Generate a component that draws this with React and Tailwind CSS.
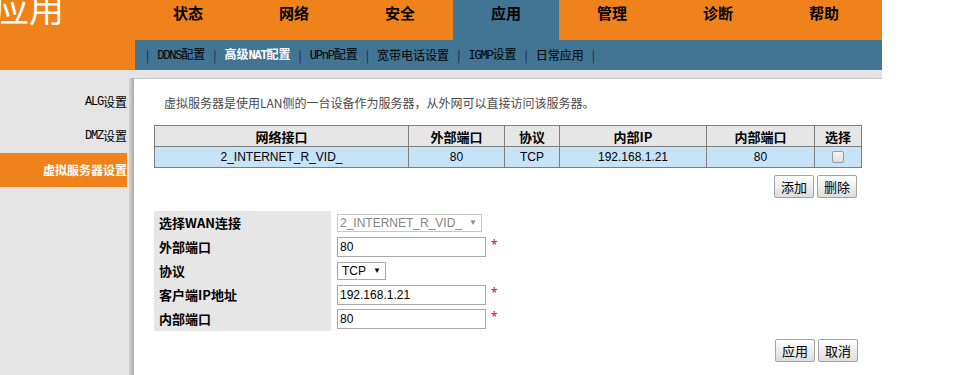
import React from "react";

const cjk = "font-['Noto_Sans_CJK_SC',sans-serif]";
const arial = "font-['Liberation_Sans','Noto_Sans_CJK_SC',sans-serif]";

const tabs = ["状态", "网络", "安全", "应用", "管理", "诊断", "帮助"];
const subItems = ["DDNS配置", "高级NAT配置", "UPnP配置", "宽带电话设置", "IGMP设置", "日常应用"];
const menu = ["ALG设置", "DMZ设置", "虚拟服务器设置"];

// old bitmap-style labels: half-width latin, full-width CJK
function Mixed({ text }) {
  const parts = text.match(/[A-Za-z0-9]+|[^A-Za-z0-9]+/g);
  return (
    <>
      {parts.map((p, i) =>
        /[A-Za-z0-9]/.test(p) ? (
          <span key={i} className="font-['Liberation_Mono',monospace] text-[12px] tracking-[-1.2px]">
            {p}
          </span>
        ) : (
          <span key={i} className={`${cjk} text-[12px]`}>
            {p}
          </span>
        )
      )}
    </>
  );
}

function Button({ children }) {
  return (
    <button
      type="button"
      className={`h-[23px] w-[40px] rounded-[2px] border border-[#a3a3a3] bg-gradient-to-b from-white to-[#dcdcdc] text-[13px] leading-none text-black ${cjk}`}
    >
      {children}
    </button>
  );
}

function Required() {
  return <span className="ml-[5px] -mt-[4px] text-[12px] text-[#e0003a]">*</span>;
}

function FormRow({ label, children }) {
  return (
    <div className="flex h-[24px]">
      <div className={`flex w-[177px] items-center bg-[#e6e6e6] pl-[5px] text-[13px] font-bold text-black ${cjk}`}>
        {label}
      </div>
      <div className="flex items-center pl-[6px]">{children}</div>
    </div>
  );
}

function TextInput({ value }) {
  return (
    <>
      <div className={`flex h-[20px] w-[149px] items-center border border-[#a9a9a9] bg-white pl-[2px] text-[12px] text-black ${arial}`}>
        {value}
      </div>
      <Required />
    </>
  );
}

export default function App() {
  return (
    <div className="relative h-[375px] w-[964px] overflow-hidden bg-white">
      {/* header */}
      <div className="flex h-[70px] w-[882px] bg-[#f0821b]">
        <div className="w-[135px] overflow-hidden">
          <div className={`-ml-[6px] -mt-[11px] text-[35px] leading-none text-white ${cjk}`}>应用</div>
        </div>
        <div className="flex flex-1 flex-col">
          <div className="flex h-[40px]">
            {tabs.map((t) => (
              <div
                key={t}
                className={`w-[106px] pt-[4px] text-center text-[15px] font-bold leading-[18px] text-black ${cjk} ${
                  t === "应用" ? "bg-[#427494]" : ""
                }`}
              >
                {t}
              </div>
            ))}
          </div>
          <div className="flex h-[30px] items-center gap-[8px] bg-[#427494] pl-[11px] text-[12px]">
            <span className={`text-[#241a4c] ${cjk}`}>|</span>
            {subItems.map((s) => (
              <React.Fragment key={s}>
                <span className={s === "高级NAT配置" ? "font-bold text-white" : "text-black"}>
                  <Mixed text={s} />
                </span>
                <span className={`text-[#241a4c] ${cjk}`}>|</span>
              </React.Fragment>
            ))}
          </div>
        </div>
      </div>

      {/* body */}
      <div className="flex h-[305px] w-[882px] bg-[#e4e4e4]">
        <div className="w-[130px] pt-[15px]">
          {menu.map((m) => (
            <div
              key={m}
              className={`flex h-[34px] w-[127px] items-center justify-end ${
                m === "虚拟服务器设置" ? "bg-[#f0821b] font-bold text-white" : "text-black"
              }`}
            >
              <Mixed text={m} />
            </div>
          ))}
        </div>

        <div className="flex flex-1 flex-col pt-[8px]">
          <div className="flex flex-1">
            <div className="w-[5px] bg-gradient-to-r from-[#d6d6d6] to-[#a9a9a9]" />
            <div className="flex-1 border-t border-[#c4c4c4] bg-white px-[20px] pt-[16px]">
              <div className={`pl-[10px] text-[12px] leading-[16px] text-[#4a4a4a] ${cjk}`}>
                虚拟服务器是使用LAN侧的一台设备作为服务器，从外网可以直接访问该服务器。
              </div>

              <table className={`mt-[14px] w-[707px] table-fixed border-collapse text-[12px] text-black ${arial}`}>
                <colgroup>
                  <col className="w-[254px]" />
                  <col className="w-[96px]" />
                  <col className="w-[55px]" />
                  <col className="w-[147px]" />
                  <col className="w-[108px]" />
                  <col className="w-[47px]" />
                </colgroup>
                <thead>
                  <tr className={`h-[21px] bg-[#e6e6e6] text-[13px] font-bold ${cjk}`}>
                    {["网络接口", "外部端口", "协议", "内部IP", "内部端口", "选择"].map((h) => (
                      <th key={h} className="border border-[#7d7d7d] p-0 text-center leading-[19px]">
                        {h}
                      </th>
                    ))}
                  </tr>
                </thead>
                <tbody>
                  <tr className="h-[21px] bg-[#c6e3f8]">
                    <td className="border border-[#7d7d7d] p-0 text-center">2_INTERNET_R_VID_</td>
                    <td className="border border-[#7d7d7d] p-0 text-center">80</td>
                    <td className="border border-[#7d7d7d] p-0 text-center">TCP</td>
                    <td className="border border-[#7d7d7d] p-0 text-center">192.168.1.21</td>
                    <td className="border border-[#7d7d7d] p-0 text-center">80</td>
                    <td className="border border-[#7d7d7d] p-0">
                      <div className="mx-auto h-[12px] w-[12px] rounded-[2px] border border-[#9a9a9a] bg-gradient-to-b from-[#f4f4f4] to-[#dedede]" />
                    </td>
                  </tr>
                </tbody>
              </table>

              <div className="mt-[7px] flex w-[707px] justify-end gap-[3px] pr-[4px]">
                <Button>添加</Button>
                <Button>删除</Button>
              </div>

              <div className="mt-[13px] flex flex-col">
                <FormRow label="选择WAN连接">
                  <div className={`flex h-[18px] w-[145px] items-center justify-between border border-[#c6c6c6] bg-white pl-[2px] pr-[4px] text-[12px] text-[#858585] ${arial}`}>
                    <span>2_INTERNET_R_VID_</span>
                    <span className="text-[8px] text-[#8a8a8a]">▼</span>
                  </div>
                </FormRow>
                <FormRow label="外部端口">
                  <TextInput value="80" />
                </FormRow>
                <FormRow label="协议">
                  <div className={`flex h-[18px] w-[49px] items-center justify-between border border-[#a9a9a9] bg-white pl-[4px] pr-[4px] text-[12px] text-black ${arial}`}>
                    <span>TCP</span>
                    <span className="text-[8px]">▼</span>
                  </div>
                </FormRow>
                <FormRow label="客户端IP地址">
                  <TextInput value="192.168.1.21" />
                </FormRow>
                <FormRow label="内部端口">
                  <TextInput value="80" />
                </FormRow>
              </div>

              <div className="mt-[8px] flex w-[707px] justify-end gap-[3px] pr-[3px]">
                <Button>应用</Button>
                <Button>取消</Button>
              </div>
            </div>
          </div>
        </div>
      </div>
    </div>
  );
}
